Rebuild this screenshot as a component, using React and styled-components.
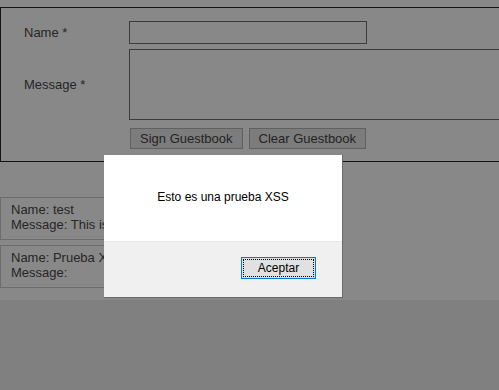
import React from 'react';
import styled, { createGlobalStyle } from 'styled-components';

const Global = createGlobalStyle`
  html, body {
    margin: 0;
    padding: 0;
    overflow: hidden;
    background: #808080;
  }
  body {
    font-family: "Liberation Sans", Arial, sans-serif;
  }
`;

const Page = styled.div`
  position: relative;
  height: 300px;
  background: #888888;
  padding-top: 7px;
  box-sizing: border-box;
  color: #262626;
`;

const FormBox = styled.form`
  width: 100%;
  height: 155px;
  box-sizing: border-box;
  border: 1px solid #141414;
  border-right: none;
  display: grid;
  grid-template-columns: 105px 1fr;
  grid-template-rows: 23px 71px 21px;
  row-gap: 5px;
  padding: 13px 0 0 23px;
  align-content: start;
`;

const Label = styled.label`
  font-size: 13px;
  align-self: center;
`;

const Field = styled.input`
  width: 238px;
  height: 23px;
  box-sizing: border-box;
  border: 1px solid #3c3c3c;
  background: #888888;
  margin: 0;
`;

const Area = styled.textarea`
  width: 100%;
  height: 71px;
  box-sizing: border-box;
  border: 1px solid #3c3c3c;
  border-right: none;
  background: #888888;
  margin: 0;
  resize: none;
`;

const Buttons = styled.div`
  grid-column: 2;
  display: flex;
  gap: 6px;
  padding-left: 1px;
  margin-top: 3px;
`;

const Btn = styled.button`
  height: 21px;
  padding: 0 9px;
  box-sizing: border-box;
  border: 1px solid #606060;
  background: #7c7c7c;
  color: #232323;
  font-family: "Liberation Sans", Arial, sans-serif;
  font-size: 13px;
  margin: 0;
`;

const Entries = styled.div`
  display: flex;
  flex-direction: column;
  gap: 5px;
  margin-top: 35px;
`;

const Entry = styled.div`
  width: 220px;
  height: 43px;
  box-sizing: border-box;
  border: 1px solid #6c6c6c;
  padding: 4px 0 0 10px;
  font-size: 13px;
  line-height: 15px;
  white-space: nowrap;
  overflow: hidden;
`;

const Dialog = styled.div`
  position: absolute;
  left: 104px;
  top: 155px;
  width: 239px;
  height: 143px;
  box-sizing: border-box;
  background: #ffffff;
  border-right: 1px solid #6a6a6a;
  border-bottom: 1px solid #6a6a6a;
  display: flex;
  flex-direction: column;
  color: #000;
`;

const DialogBody = styled.div`
  height: 86px;
  display: flex;
  align-items: center;
  justify-content: center;
  font-size: 12px;
  padding-bottom: 2px;
  box-sizing: border-box;
`;

const DialogFoot = styled.div`
  flex: 1;
  background: #f0f0f0;
  border-top: 1px solid #e6e6e6;
  display: flex;
  justify-content: flex-end;
  align-items: flex-start;
  padding: 15px 26px 0 0;
`;

const OkButton = styled.button`
  width: 75px;
  height: 22px;
  box-sizing: border-box;
  border: 1px solid #0078d7;
  background: #e1e1e1;
  outline: 1px dotted #000;
  outline-offset: -3px;
  font-family: "Liberation Sans", Arial, sans-serif;
  font-size: 12px;
  color: #000;
  margin: 0;
  padding: 0;
`;

export default function App() {
  return (
    <>
      <Global />
      <Page>
        <FormBox onSubmit={e => e.preventDefault()}>
          <Label>Name *</Label>
          <Field />
          <Label>Message *</Label>
          <Area />
          <Buttons>
            <Btn type="button">Sign Guestbook</Btn>
            <Btn type="button">Clear Guestbook</Btn>
          </Buttons>
        </FormBox>
        <Entries>
          <Entry>
            Name: test
            <br />
            Message: This is a test
          </Entry>
          <Entry>
            Name: Prueba XSS
            <br />
            Message:
          </Entry>
        </Entries>
        <Dialog>
          <DialogBody>Esto es una prueba XSS</DialogBody>
          <DialogFoot>
            <OkButton>Aceptar</OkButton>
          </DialogFoot>
        </Dialog>
      </Page>
    </>
  );
}
